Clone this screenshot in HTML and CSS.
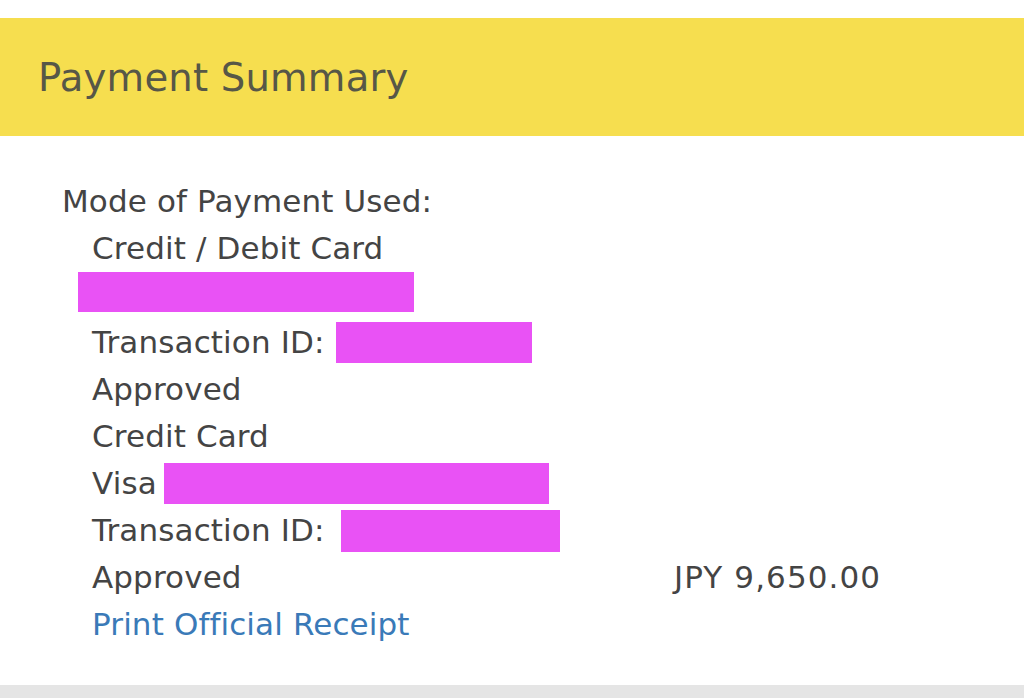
FILE: index.html
```html
<!DOCTYPE html>
<html lang="en">
<head>
<meta charset="utf-8">
<title>Payment Summary</title>
<link rel="stylesheet" href="styles.css">
</head>
<body>
<div class="page">
  <header class="banner">
    <h1 class="title">Payment Summary</h1>
  </header>
  <section class="summary">
    <div class="row label">Mode of Payment Used:</div>
    <div class="row indent">Credit / Debit Card</div>
    <div class="row redact-row"><span class="redact r1"></span></div>
    <div class="row indent">Transaction ID: <span class="redact r2"></span></div>
    <div class="row indent">Approved</div>
    <div class="row indent">Credit Card</div>
    <div class="row indent">Visa <span class="redact r3"></span></div>
    <div class="row indent">Transaction ID: <span class="redact r4"></span></div>
    <div class="row indent amount-row"><span class="status">Approved</span><span class="amount">JPY 9,650.00</span></div>
    <div class="row indent"><a class="link" href="#">Print Official Receipt</a></div>
  </section>
  <div class="footer-bar"></div>
</div>
</body>
</html>
```
FILE: styles.css
```css
html, body {
  margin: 0;
  padding: 0;
  background: #ffffff;
}
body {
  font-family: "DejaVu Sans", Verdana, sans-serif;
  color: #444444;
}
.page {
  width: 1024px;
  height: 698px;
  display: flex;
  flex-direction: column;
  overflow: hidden;
  padding-top: 18px;
  box-sizing: border-box;
}
.banner {
  background: #f6de4f;
  height: 118px;
  display: flex;
  align-items: center;
  padding-left: 38px;
  flex: none;
}
.title {
  margin: 0;
  font-weight: normal;
  font-size: 38.6px;
  letter-spacing: 0.2px;
  color: #575747;
  line-height: 1;
  padding-top: 3px;
}
.summary {
  padding: 42px 0 0 62px;
  flex: 1;
  font-size: 31px;
  letter-spacing: 0.12px;
}
.row {
  height: 47px;
  line-height: 47px;
  white-space: nowrap;
  display: flex;
  align-items: center;
}
.indent {
  padding-left: 30px;
}
.redact-row {
  padding-left: 16px;
  align-items: flex-start;
}
.redact {
  display: inline-block;
  background: #e952f5;
}
.r1 { width: 336px; height: 40px; margin-top: 0; }
.r2 { width: 196px; height: 41px; margin-left: 12px; }
.r3 { width: 385px; height: 41px; margin-left: 7px; }
.r4 { width: 219px; height: 42px; margin-left: 17px; }
.status {
  width: 582px;
}
.amount {
  letter-spacing: 1.1px;
}
.link {
  color: #3a7ab8;
  text-decoration: none;
}
.footer-bar {
  height: 13px;
  background: #e5e5e5;
  flex: none;
}
```
